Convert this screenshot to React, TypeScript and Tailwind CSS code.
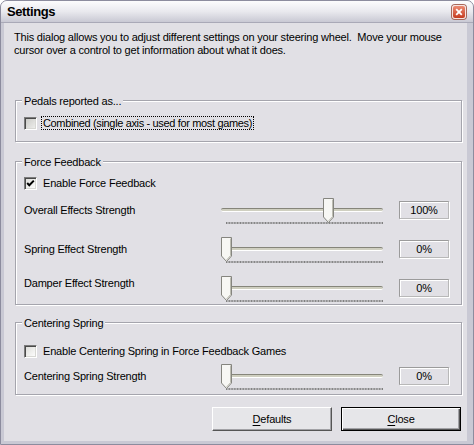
import type { ReactNode } from "react";

const ticks = Array.from({ length: 101 }, (_, i) => 10.5 + i * 1.56);

function Checkbox({ checked, dim }: { checked?: boolean; dim?: boolean }) {
  return (
    <span
      className={`relative h-[13px] w-[13px] shrink-0 border border-t-[#7c7c7c] border-l-[#7c7c7c] border-b-white border-r-white bg-linear-to-br ${dim ? "from-[#c8c8c4] to-[#f0f0ee]" : "from-[#dcdcd8] to-white"} shadow-[inset_1px_1px_0_#4a4a4a,inset_-1px_-1px_0_#d8d8d4]`}
    >
      {checked && (
        <svg width="11" height="11" viewBox="0 0 11 11" className="absolute left-0 top-0">
          <polyline points="2.2,5 4.3,7.3 8.8,2.6" fill="none" stroke="#000" strokeWidth="2" />
        </svg>
      )}
    </span>
  );
}

function CheckRow({ checked, focused, children }: { checked?: boolean; focused?: boolean; children: ReactNode }) {
  return (
    <div className="flex h-[14px] items-center">
      <Checkbox checked={checked} dim={focused} />
      {focused ? (
        <span className="ml-[4px] border border-dotted border-black px-px leading-[12px] tracking-[-0.35px]">{children}</span>
      ) : (
        <span className="ml-[6px] leading-[13px]">{children}</span>
      )}
    </div>
  );
}

function Slider({ frac }: { frac: number }) {
  return (
    <div className="relative h-[20px] w-[172px] shrink-0">
      <div className="absolute left-[5px] right-[5px] top-[8px] h-[4px] rounded-[2px] border-t border-b border-t-[#85857a] border-b-white bg-[#cfcfc0]" />
      <svg width="172" height="3" className="absolute left-0 top-[22px]">
        {ticks.map((x, i) => (
          <line key={i} x1={x} x2={x} y1="0" y2="2" stroke="#808080" strokeWidth="1" />
        ))}
      </svg>
      <svg
        width="11"
        height="25"
        viewBox="0 0 11 25"
        className="absolute top-[-2px]"
        style={{ left: 5 + Math.round(frac * 156) }}
      >
        <path d="M0.5 0.5 H10.5 V19 L5.5 24.5 L0.5 19 Z" fill="#f7f7f4" stroke="#85857f" />
        <path d="M9.5 1.5 V18.6 L5.5 23" fill="none" stroke="#bcbcb2" />
      </svg>
    </div>
  );
}

function SliderRow({ label, frac, value, labelClass = "" }: { label: string; frac: number; value: string; labelClass?: string }) {
  return (
    <div className="flex h-[20px] items-center">
      <span className={`w-[192px] shrink-0 leading-[13px] ${labelClass}`}>{label}</span>
      <Slider frac={frac} />
      <div className="ml-[11px] flex h-[18px] w-[50px] items-center justify-center border border-t-[#9b9b9b] border-l-[#9b9b9b] border-b-[#b8b8b8] border-r-[#b8b8b8] shadow-[inset_1px_1px_0_#fff,1px_1px_0_#fff]">
        {value}
      </div>
    </div>
  );
}

function Group({ title, className, children }: { title: string; className: string; children: ReactNode }) {
  return (
    <div
      className={`relative ml-[11px] w-[447px] border border-[#a5a5ad] pl-[8px] shadow-[inset_1px_1px_0_#fff,1px_1px_0_#fff] ${className}`}
    >
      <span className="absolute left-[6px] top-[-7px] bg-[#e1e0e5] px-[2px] leading-[14px]">{title}</span>
      {children}
    </div>
  );
}

export default function App() {
  return (
    <div className="flex h-[445px] w-[474px] flex-col overflow-hidden rounded-t-[7px] border border-[#8c8c9e] bg-[#c9c9d4] font-['Liberation_Sans',Arial,sans-serif] text-[11px] tracking-[-0.2px] text-black">
      <div className="flex h-[22px] shrink-0 items-center justify-between border-b border-b-[#a9a9b7] bg-linear-to-b from-[#fcfcfd] via-[#e9e9ee] to-[#c9c9d4] pl-[6px] pr-[7px]">
        <span className="text-[13px] font-bold tracking-[-0.4px]">Settings</span>
        <span className="flex h-[14px] w-[14px] items-center justify-center rounded-[3px] border border-[#f6e4e0] bg-linear-to-b from-[#ec8a72] to-[#c43a1e] shadow-[0_0_0_1px_#a8685a]">
          <svg width="8" height="8" viewBox="0 0 8 8">
            <path d="M1.2 1.2 L6.8 6.8 M6.8 1.2 L1.2 6.8" stroke="#fff" strokeWidth="1.8" />
          </svg>
        </span>
      </div>

      <div className="mb-[3px] ml-[3px] mr-[6px] flex flex-1 flex-col bg-[#e1e0e5]">
        <p className="mt-[8px] pl-[10px] leading-[13px]">
          This dialog allows you to adjust different settings on your steering wheel.&nbsp; Move your mouse
          <br />
          cursor over a control to get information about what it does.
        </p>

        <Group title="Pedals reported as..." className="mt-[43px] h-[42px] pt-[15px]">
          <CheckRow focused>Combined (single axis - used for most games)</CheckRow>
        </Group>

        <Group title="Force Feedback" className="mt-[19px] h-[144px] pt-[14px]">
          <CheckRow checked>Enable Force Feedback</CheckRow>
          <div className="mt-[10px]">
            <SliderRow label="Overall Effects Strength" frac={0.655} value="100%" />
          </div>
          <div className="mt-[19px]">
            <SliderRow label="Spring Effect Strength" frac={0} value="0%" />
          </div>
          <div className="mt-[19px]">
            <SliderRow label="Damper Effect Strength" frac={0} value="0%" labelClass="-mt-[9px]" />
          </div>
        </Group>

        <Group title="Centering Spring" className="mt-[17px] h-[73px] pt-[21px]">
          <CheckRow>Enable Centering Spring in Force Feedback Games</CheckRow>
          <div className="mt-[8px]">
            <SliderRow label="Centering Spring Strength" frac={0} value="0%" />
          </div>
        </Group>

        <div className="mt-[12px] flex justify-end gap-[9px] pr-[6px]">
          <button className="h-[24px] w-[120px] border border-t-white border-l-white border-b-[#555] border-r-[#555] bg-[#e6e6e9] shadow-[inset_-1px_-1px_0_#a2a2a6]">
            <span className="underline underline-offset-2">D</span>efaults
          </button>
          <button className="h-[24px] w-[120px] border border-black bg-[#e6e6e9] shadow-[inset_1px_1px_0_#fff,inset_-1px_-1px_0_#555,inset_-2px_-2px_0_#a2a2a6]">
            <span className="underline underline-offset-2">C</span>lose
          </button>
        </div>
      </div>
    </div>
  );
}
